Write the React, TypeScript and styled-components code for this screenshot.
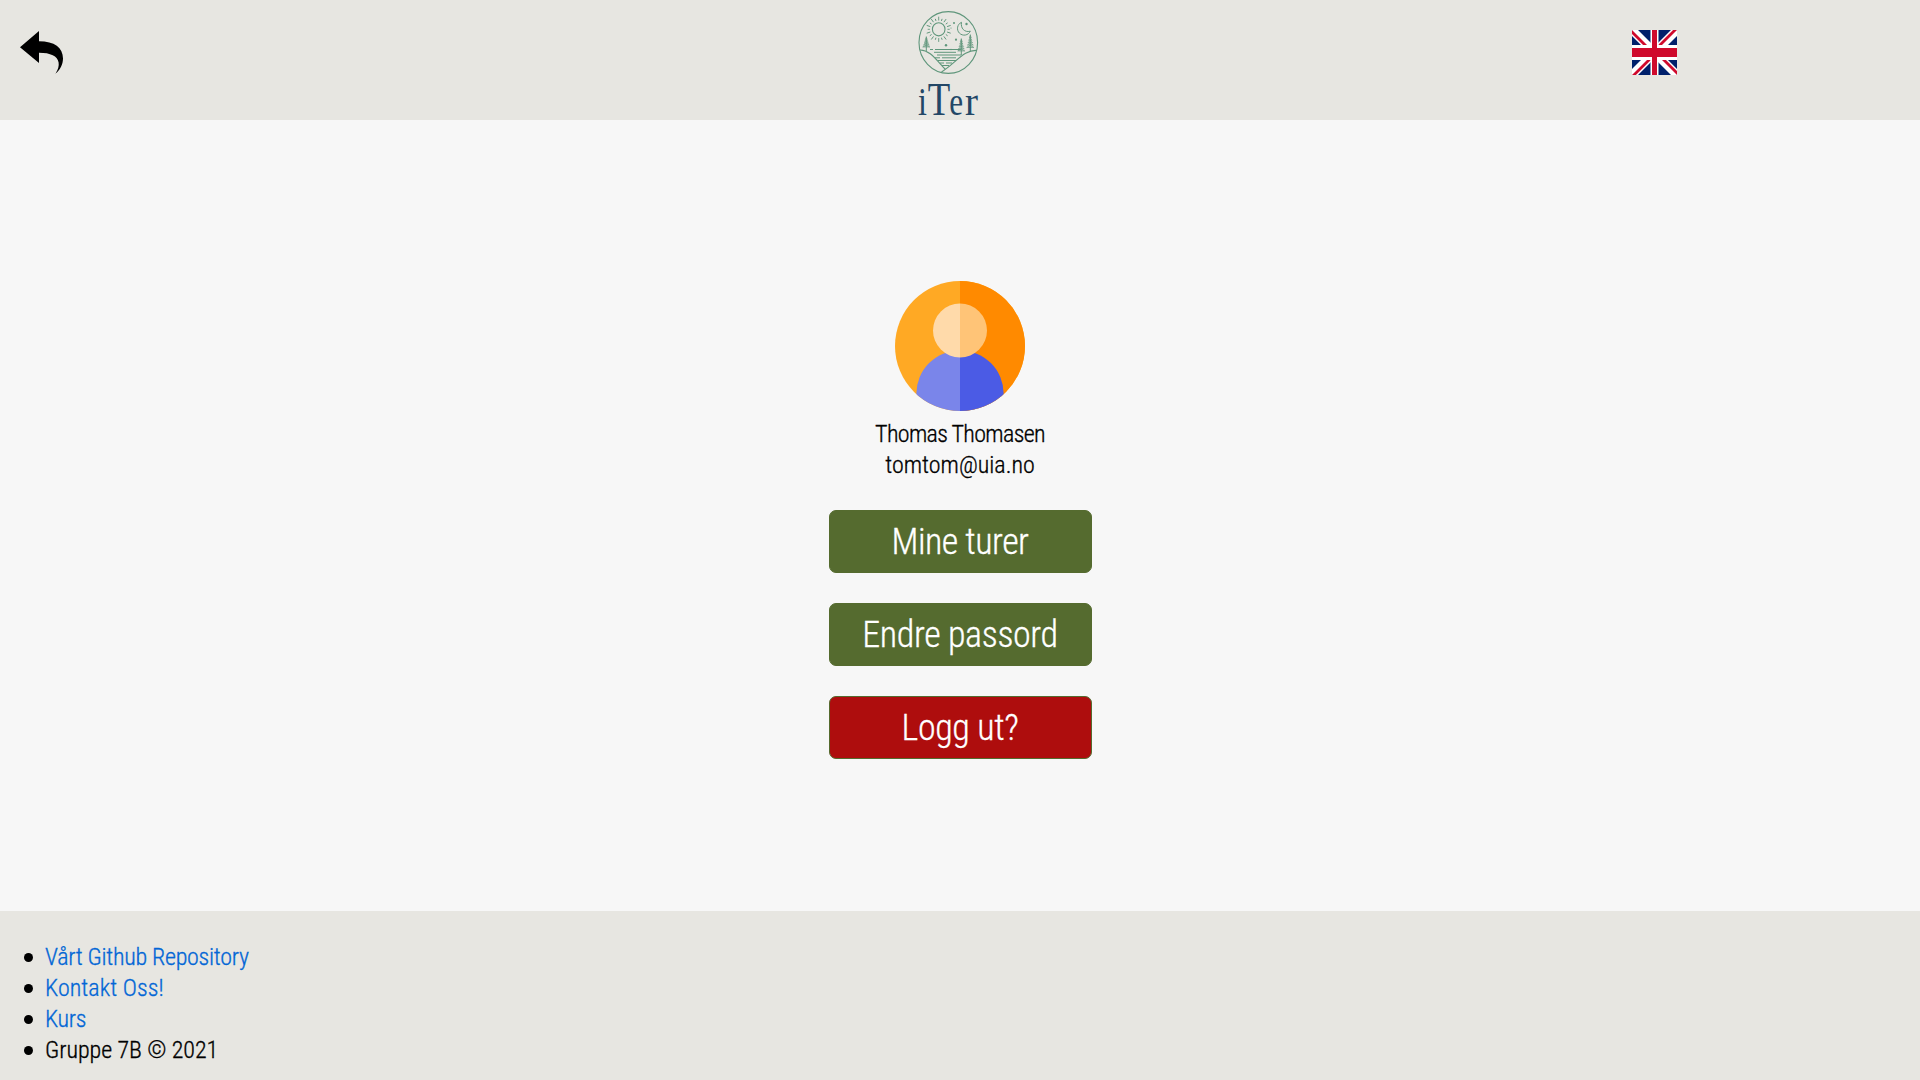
import React from 'react';
import styled, { createGlobalStyle } from 'styled-components';

const GlobalStyle = createGlobalStyle`
  *, *::before, *::after { box-sizing: border-box; }
  html, body { margin: 0; padding: 0; background: #f7f7f7; }
  body {
    font-family: 'Roboto Condensed', Roboto, 'Liberation Sans', sans-serif;
    font-stretch: condensed;
    font-weight: 300;
    font-size: 24px;
    line-height: 31px;
    color: #000;
    -webkit-text-stroke: 0.3px currentColor;
  }
`;

const Page = styled.div`
  display: flex;
  flex-direction: column;
  height: 100vh;
`;

const Header = styled.header`
  display: grid;
  grid-template-columns: 1fr 80px 1fr;
  flex: none;
  height: 120px;
  background: #e7e6e1;
`;

const BackButton = styled.button`
  justify-self: start;
  align-self: start;
  margin: 30px 0 0 19px;
  padding: 0;
  border: 0;
  background: none;
  line-height: 0;
  cursor: pointer;
`;

const LogoLink = styled.a`
  display: block;
  height: 120px;
  margin-left: -12px;
  line-height: 0;
  -webkit-text-stroke: 0;

  svg { overflow: visible; }
`;

const LanguageButton = styled.button`
  justify-self: end;
  align-self: start;
  margin: 30px 243px 0 0;
  padding: 0;
  border: 0;
  background: none;
  line-height: 0;
  cursor: pointer;
`;

const Profile = styled.main`
  display: flex;
  flex: 1;
  flex-direction: column;
  align-items: center;
  padding-top: 161px;
`;

const AvatarFrame = styled.div`
  width: 130px;
  height: 130px;
  margin-bottom: 8px;
  line-height: 0;
`;

const ProfileLine = styled.p<{ $tracking?: number }>`
  margin: 0;
  letter-spacing: ${({ $tracking = 0 }) => $tracking}px;
`;

const Actions = styled.div`
  display: flex;
  flex-direction: column;
  gap: 30px;
  margin-top: 29px;
`;

const ActionButton = styled.button<{ $danger?: boolean; $tracking?: number }>`
  width: 263px;
  height: 63px;
  padding: 1px 0 0;
  border: 1px solid #556b2f;
  border-radius: 7px;
  background: ${({ $danger }) => ($danger ? '#ae0d0d' : '#556b2f')};
  color: #fff;
  font: inherit;
  font-size: 36px;
  line-height: 46px;
  letter-spacing: ${({ $tracking = 0 }) => $tracking}px;
  cursor: pointer;
`;

const Footer = styled.footer`
  flex: none;
  height: 169px;
  padding: 31px 0 0 24px;
  background: #e7e6e1;
`;

const FooterList = styled.ul`
  margin: 0;
  padding: 0;
  list-style: none;
`;

const FooterItem = styled.li<{ $tracking?: number }>`
  display: flex;
  align-items: center;
  gap: 12px;
  height: 31px;
  letter-spacing: ${({ $tracking = 0 }) => $tracking}px;

  &::before {
    content: '';
    width: 9px;
    height: 9px;
    border-radius: 50%;
    background: #000;
  }
`;

const FooterLink = styled.a`
  color: #0366d6;
  text-decoration: none;
  -webkit-text-stroke-color: #0366d6;
`;

const BackArrow = () => (
  <svg width="46" height="46" viewBox="19 30 46 46" aria-hidden="true">
    <path d="M20 47.3 39 31v10.3c15.5 0 24 6.5 24 17.2 0 5.5-2.7 11.3-7.6 15.3 2.7-4 3.8-8 3.2-11.3C57.7 56 50.5 52.7 39 52.7V63Z" />
  </svg>
);

const rays = Array.from({ length: 20 }, (_, i) => i * 18);

const Tree = ({ x, top, bottom }: { x: number; top: number; bottom: number }) => {
  const tiers = [0, 1, 2, 3, 4];
  const step = (bottom - top - 5) / 5;
  return (
    <g>
      <path d={`M${x} ${top}V${bottom}`} strokeWidth="1" />
      {tiers.map((n) => {
        const y = top + 1 + n * step;
        const half = 1 + n * 0.65;
        return <path key={n} d={`M${x - half} ${y + step}L${x} ${y}L${x + half} ${y + step}Z`} fill="#6b9e84" fillOpacity="0.45" strokeWidth="0.6" />;
      })}
    </g>
  );
};

const Logo = () => (
  <svg width="80" height="120" viewBox="908 0 80 120" role="img" aria-label="iTer">
    <defs>
      <clipPath id="badge"><ellipse cx="948.3" cy="42.5" rx="29.4" ry="31" /></clipPath>
    </defs>
    <g fill="none" stroke="#5f967b" strokeWidth="0.9">
      <ellipse cx="948.3" cy="42.5" rx="29.3" ry="30.9" strokeWidth="1.1" />
      <ellipse cx="938.7" cy="29.3" rx="6.3" ry="6.6" strokeWidth="1.1" />
      {rays.map((angle, i) => (
        <path key={angle} d={`M938.7 20.5V${i % 2 ? 18.3 : 16.7}`} transform={`rotate(${angle} 938.7 29.3)`} />
      ))}
      <path d="M961.5 22.3a6.7 6.7 0 1 0 8.8 8.900c-5.900 1.600-9.900-3.100-8.800-8.900Z" strokeWidth="1" />
      <g clipPath="url(#badge)">
        <path d="M919 50c11-1 18 11 26.5 19.5M978 50.5c-14-1.5-22 12.5-36.5 21.5" strokeWidth="1.1" />
        <path d="M930 49.5h3M935 49.5h26M934 52.3h22M937 55h24M935 57.8h5M942 57.8h14M938 60.5h18M940 63h4M946 63h6M942 65.5h7" strokeWidth="1" />
      </g>
      <Tree x={926.3} top={36.5} bottom={51} />
      <Tree x={961.3} top={38.5} bottom={55} />
      <Tree x={970.3} top={34.5} bottom={51.5} />
    </g>
    <g fill="#5f967b">
      <circle cx="954" cy="23" r="1" />
      <circle cx="966.5" cy="24" r="1.2" />
      <circle cx="946" cy="45.3" r="1.2" />
      <circle cx="956" cy="39.7" r="1.1" />
      <circle cx="951" cy="28" r="0.6" />
      <circle cx="951" cy="49.5" r="0.7" />
    </g>
    <g fill="#234766" fontFamily="'Liberation Serif', serif" fontWeight="400">
      <text transform="translate(918 115) scale(.82 1)" fontSize="39">i</text>
      <text transform="translate(927.7 115) scale(.8 1)" fontSize="46">T</text>
      <text transform="translate(949.2 115) scale(.8 1)" fontSize="39">e</text>
      <text transform="translate(965 115) scale(1 1)" fontSize="39">r</text>
    </g>
  </svg>
);

const UnionFlag = () => (
  <svg width="45" height="45" viewBox="0 0 45 45" role="img" aria-label="English">
    <defs>
      <clipPath id="flag-edge"><path d="M0 0h45v45H0Z" /></clipPath>
      <clipPath id="flag-quarters"><path d="M22.5 22.5H45V45ZM22.5 22.5V45H0ZM22.5 22.5H0V0ZM22.5 22.5V0H45Z" /></clipPath>
    </defs>
    <g clipPath="url(#flag-edge)">
      <path fill="#00206b" d="M0 0h45v45H0Z" />
      <path stroke="#fff" strokeWidth="8.5" d="M0 0l45 45M45 0L0 45" />
      <path stroke="#cf0a2c" strokeWidth="5.6" d="M0 0l45 45M45 0L0 45" clipPath="url(#flag-quarters)" />
      <path fill="#fff" d="M18.5 0h8v45h-8ZM0 15h45v15H0Z" />
      <path fill="#cf0a2c" d="M20 0h5v45h-5ZM0 18h45v9H0Z" />
    </g>
  </svg>
);

const Avatar = () => (
  <svg width="130" height="130" viewBox="0 0 130 130" role="img" aria-label="Thomas Thomasen">
    <defs>
      <clipPath id="avatar-edge"><circle cx="65" cy="65" r="65" /></clipPath>
      <clipPath id="avatar-right"><path d="M65 0h65v130H65Z" /></clipPath>
    </defs>
    <g clipPath="url(#avatar-edge)">
      <path fill="#ffa924" d="M0 0h130v130H0Z" />
      <circle cx="65" cy="113" r="43.7" fill="#7a85ea" />
      <circle cx="65" cy="49.5" r="27" fill="#ffdaaa" />
      <g clipPath="url(#avatar-right)">
        <path fill="#ff8a00" d="M65 0h65v130H65Z" />
        <circle cx="65" cy="113" r="43.7" fill="#4b5be5" />
        <circle cx="65" cy="49.5" r="27" fill="#ffc477" />
      </g>
    </g>
  </svg>
);

export default function App() {
  return (
    <Page>
      <GlobalStyle />
      <Header>
        <BackButton aria-label="Tilbake"><BackArrow /></BackButton>
        <LogoLink><Logo /></LogoLink>
        <LanguageButton><UnionFlag /></LanguageButton>
      </Header>
      <Profile>
        <AvatarFrame><Avatar /></AvatarFrame>
        <ProfileLine $tracking={-0.66}>Thomas Thomasen</ProfileLine>
        <ProfileLine>tomtom@uia.no</ProfileLine>
        <Actions>
          <ActionButton $tracking={-0.52}>Mine turer</ActionButton>
          <ActionButton $tracking={-0.38}>Endre passord</ActionButton>
          <ActionButton $danger $tracking={-0.38}>Logg ut?</ActionButton>
        </Actions>
      </Profile>
      <Footer>
        <FooterList>
          <FooterItem $tracking={-0.28}><FooterLink>Vårt Github Repository</FooterLink></FooterItem>
          <FooterItem $tracking={0.05}><FooterLink>Kontakt Oss!</FooterLink></FooterItem>
          <FooterItem $tracking={-0.3}><FooterLink>Kurs</FooterLink></FooterItem>
          <FooterItem $tracking={-0.05}>Gruppe 7B © 2021</FooterItem>
        </FooterList>
      </Footer>
    </Page>
  );
}
